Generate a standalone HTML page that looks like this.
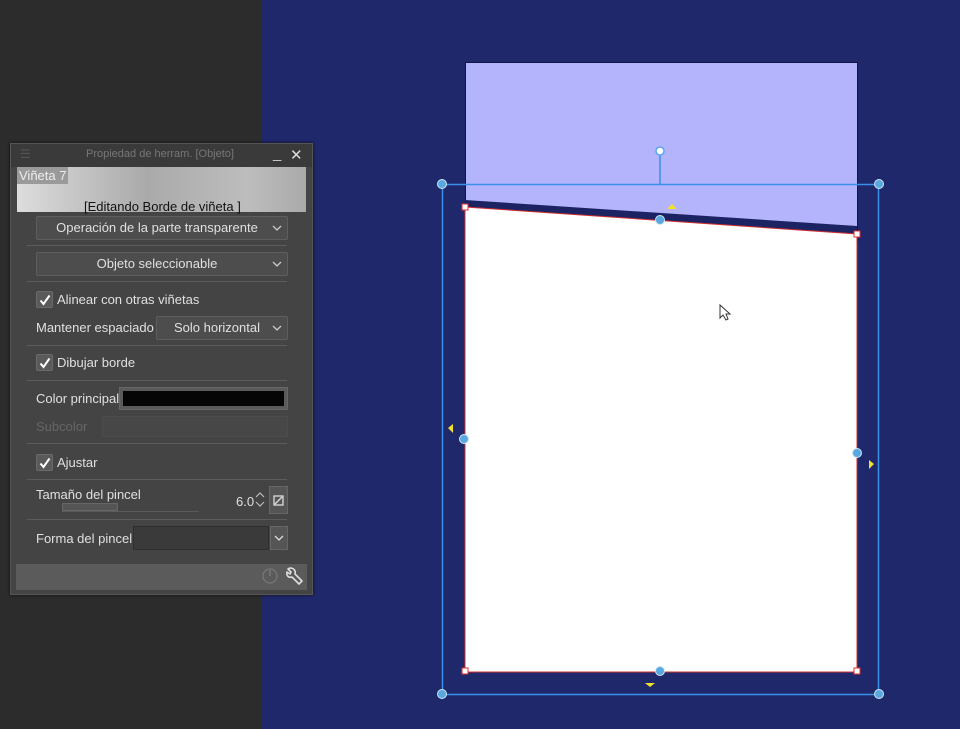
<!DOCTYPE html>
<html><head><meta charset="utf-8"><style>
*{margin:0;padding:0;box-sizing:border-box}
body{width:960px;height:729px;overflow:hidden;position:relative;background:#1f286b;font-family:"Liberation Sans",sans-serif;font-size:13px;color:#ddd}
.abs{position:absolute}
.sel{position:absolute;background:#4d4d4d;border:1px solid #5e5e5e;border-radius:2px;color:#e0e0e0;text-align:center;line-height:22px;height:24px;padding-right:10px}
.sel svg,.cv{position:absolute;right:5px;top:8px}
.sep{position:absolute;left:27px;width:260px;height:1px;background:#5c5c5c}
.cb{position:absolute;width:17px;height:17px;background:#5a5a5a;border:1px solid #6a6a6a;border-radius:2px}
.cb svg{position:absolute;left:2px;top:2px}
.lbl{position:absolute;color:#e0e0e0;white-space:nowrap}
</style></head><body>
<div class="abs" style="left:0;top:0;width:262px;height:729px;background:#2c2c2c"></div>
<svg class="abs" style="left:0;top:0" width="960" height="729">
<rect x="465.5" y="62.5" width="392" height="180" fill="#b4b4fc" stroke="#10164a"/>
<polygon points="465,200 857,226 857,234 465,207" fill="#1c2362"/>
<polygon points="465,207 857,234 857,672 465,672" fill="#ffffff" stroke="#d23030" stroke-width="1"/>
<rect x="442.5" y="184.5" width="436" height="510" fill="none" stroke="#3a8fe8" stroke-width="1.5"/>
<line x1="660" y1="151" x2="660" y2="184" stroke="#3a8fe8" stroke-width="1.5"/>
<circle cx="660" cy="151" r="4" fill="#fff" stroke="#5aa8e8" stroke-width="1.5"/>
<g fill="#5aa8e0" stroke="#cfe6f8" stroke-width="1">
<circle cx="442" cy="184" r="4.5"/><circle cx="879" cy="184" r="4.5"/><circle cx="442" cy="694" r="4.5"/><circle cx="879" cy="694" r="4.5"/>
<circle cx="660" cy="220" r="4.5"/><circle cx="464" cy="439" r="4.5"/><circle cx="857" cy="453" r="4.5"/><circle cx="660" cy="671" r="4.5"/></g>
<g fill="#fff" stroke="#e03030"><rect x="462" y="204" width="6" height="6"/><rect x="854" y="231" width="6" height="6"/><rect x="462" y="668" width="6" height="6"/><rect x="854" y="668" width="6" height="6"/></g>
<g fill="#f0e030"><polygon points="672,204 667,209 677,209"/><polygon points="645,683 655,683 650,687"/><polygon points="453,424 453,433 448,428"/><polygon points="869,460 869,469 874,464"/></g>
<path d="M720 305 L720 318 L723 315 L726 320 L728 319 L726 314 L730 314 Z" fill="#fff" stroke="#333" stroke-width="1"/>
</svg>
<div class="abs" style="left:10px;top:143px;width:303px;height:452px;background:#444;border:1px solid #555;box-shadow:0 0 3px #111"></div>
<div class="abs" style="left:11px;top:144px;width:301px;height:23px;background:#3a3a3a"></div>
<div class="lbl" style="left:86px;top:148px;color:#777;font-size:11px">Propiedad de herram. [Objeto]</div>
<div class="lbl" style="left:20px;top:147px;color:#555;font-size:12px">☰</div>
<div class="lbl" style="left:273px;top:145px;color:#ccc;font-size:15px">_</div>
<div class="lbl" style="left:290px;top:146px;color:#ddd;font-size:15px">✕</div>
<div class="abs" style="left:17px;top:167px;width:289px;height:45px;background:linear-gradient(90deg,#ddd,#aaa 45%,#bdbdbd 80%,#aaa)"></div>
<div class="abs" style="left:17px;top:167px;width:51px;height:17px;background:#9a9a9a;color:#eee;line-height:17px;padding-left:2px">Viñeta 7</div>
<div class="lbl" style="left:84px;top:199px;color:#111">[Editando Borde de viñeta ]</div>
<div class="sel" style="left:36px;top:216px;width:252px">Operación de la parte transparente<svg width="10" height="6"><path d="M1 1 L5 5 L9 1" fill="none" stroke="#ccc" stroke-width="1.3"/></svg></div>
<div class="sep" style="top:245px"></div>
<div class="sel" style="left:36px;top:252px;width:252px">Objeto seleccionable<svg width="10" height="6"><path d="M1 1 L5 5 L9 1" fill="none" stroke="#ccc" stroke-width="1.3"/></svg></div>
<div class="sep" style="top:281px"></div>
<div class="cb" style="left:36px;top:291px"><svg width="12" height="12"><path d="M1.5 6.5 L4.5 10 L10.5 1.5" fill="none" stroke="#fff" stroke-width="2"/></svg></div>
<div class="lbl" style="left:57px;top:292px">Alinear con otras viñetas</div>
<div class="lbl" style="left:36px;top:320px">Mantener espaciado</div>
<div class="sel" style="left:156px;top:316px;width:132px">Solo horizontal<svg width="10" height="6"><path d="M1 1 L5 5 L9 1" fill="none" stroke="#ccc" stroke-width="1.3"/></svg></div>
<div class="sep" style="top:345px"></div>
<div class="cb" style="left:36px;top:354px"><svg width="12" height="12"><path d="M1.5 6.5 L4.5 10 L10.5 1.5" fill="none" stroke="#fff" stroke-width="2"/></svg></div>
<div class="lbl" style="left:57px;top:355px">Dibujar borde</div>
<div class="sep" style="top:380px"></div>
<div class="lbl" style="left:36px;top:391px">Color principal</div>
<div class="abs" style="left:119px;top:387px;width:169px;height:23px;background:#5a5a5a;border:1px solid #666;padding:3px"><div style="background:#050505;height:100%"></div></div>
<div class="lbl" style="left:36px;top:419px;color:#666">Subcolor</div>
<div class="abs" style="left:102px;top:416px;width:186px;height:21px;background:#474747;border:1px solid #4c4c4c"></div>
<div class="sep" style="top:443px"></div>
<div class="cb" style="left:36px;top:454px"><svg width="12" height="12"><path d="M1.5 6.5 L4.5 10 L10.5 1.5" fill="none" stroke="#fff" stroke-width="2"/></svg></div>
<div class="lbl" style="left:57px;top:455px">Ajustar</div>
<div class="sep" style="top:479px"></div>
<div class="lbl" style="left:36px;top:487px">Tamaño del pincel</div>
<div class="abs" style="left:62px;top:503px;width:137px;height:9px;border-bottom:1px solid #5a5a5a"></div>
<div class="abs" style="left:62px;top:503px;width:56px;height:8px;background:#555;border:1px solid #666"></div>
<div class="lbl" style="left:236px;top:494px">6.0</div>
<svg class="abs" style="left:254px;top:491px" width="12" height="18"><path d="M2 6 L6 2 L10 6 M2 11 L6 15 L10 11" fill="none" stroke="#bbb" stroke-width="1.2"/></svg>
<div class="abs" style="left:269px;top:486px;width:19px;height:28px;background:#555;border:1px solid #666"><svg style="position:absolute;left:3px;top:8px" width="11" height="11"><rect x="1" y="1" width="9" height="9" fill="none" stroke="#ddd" stroke-width="1.3"/><path d="M2 9 L9 2" stroke="#ddd" stroke-width="1.3"/></svg></div>
<div class="sep" style="top:519px"></div>
<div class="lbl" style="left:36px;top:531px">Forma del pincel</div>
<div class="abs" style="left:133px;top:526px;width:136px;height:24px;background:#3a3a3a;border:1px solid #2e2e2e"></div>
<div class="abs" style="left:270px;top:526px;width:18px;height:24px;background:#555;border:1px solid #666"><svg class="cv" style="right:3px" width="10" height="6"><path d="M1 1 L5 5 L9 1" fill="none" stroke="#ddd" stroke-width="1.3"/></svg></div>
<div class="abs" style="left:16px;top:564px;width:291px;height:26px;background:#5b5b5b"></div>
<svg class="abs" style="left:261px;top:567px" width="18" height="18"><circle cx="9" cy="9" r="7" fill="none" stroke="#777" stroke-width="1.3"/><path d="M9 3 V9" stroke="#777" stroke-width="1.5"/></svg>
<svg class="abs" style="left:284px;top:566px" width="20" height="20"><path d="M4 3 L7 6 L6 8 L3 6 C2 10 5 12 8 11 L15 18 L18 15 L11 8 C12 5 10 2 6 2 Z" fill="none" stroke="#ddd" stroke-width="1.6" stroke-linejoin="round"/></svg>
</body></html>
